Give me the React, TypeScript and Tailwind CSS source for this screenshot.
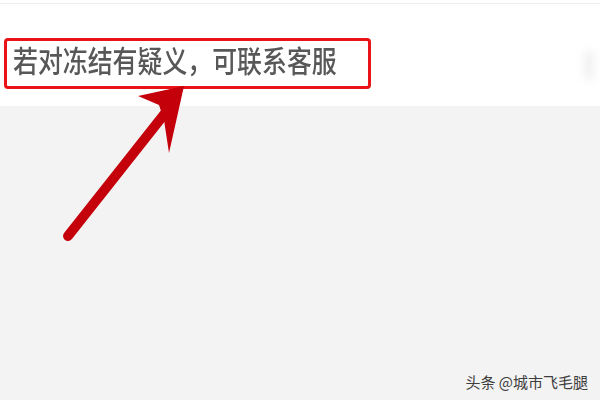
import React from "react";

function Arrow() {
  return (
    <svg
      className="pointer-events-none absolute left-0 top-0"
      width="600"
      height="400"
      viewBox="0 0 600 400"
    >
      <line
        x1="68"
        y1="236"
        x2="166"
        y2="112"
        stroke="#c4000a"
        strokeWidth="10"
        strokeLinecap="round"
      />
      <polygon points="184,86 138,96 159,105 164,120 169,153" fill="#c4000a" />
    </svg>
  );
}

export default function App() {
  return (
    <div
      className="relative h-[400px] w-[600px] overflow-hidden bg-[#f3f3f3]"
      style={{ fontFamily: '"Noto Sans CJK SC", "Noto Sans", sans-serif' }}
    >
      <div className="h-[106px] bg-white pt-[3px]">
        <div className="h-px bg-[#ececec]" />
        <div className="flex items-start justify-between pl-[4px] pr-[6px] pt-[34px]">
          <div className="h-[51px] w-[367px] overflow-hidden rounded-[4px] border-[3px] border-[#ea1418] pl-[6px]">
            <div className="-mt-[3px] origin-left scale-x-[0.83] whitespace-nowrap text-[30px] font-medium leading-[42px] text-[#585858]">
              若对冻结有疑义，可联系客服
            </div>
          </div>
          <div className="mt-[12px] h-[30px] w-[10px] rounded-full bg-[#f1f1f1] blur-[4px]" />
        </div>
      </div>

      <Arrow />

      <div className="absolute bottom-[9px] right-[12px] text-[15px] leading-[18px] text-[#3d3d3d]">
        头条 @城市飞毛腿
      </div>
    </div>
  );
}
